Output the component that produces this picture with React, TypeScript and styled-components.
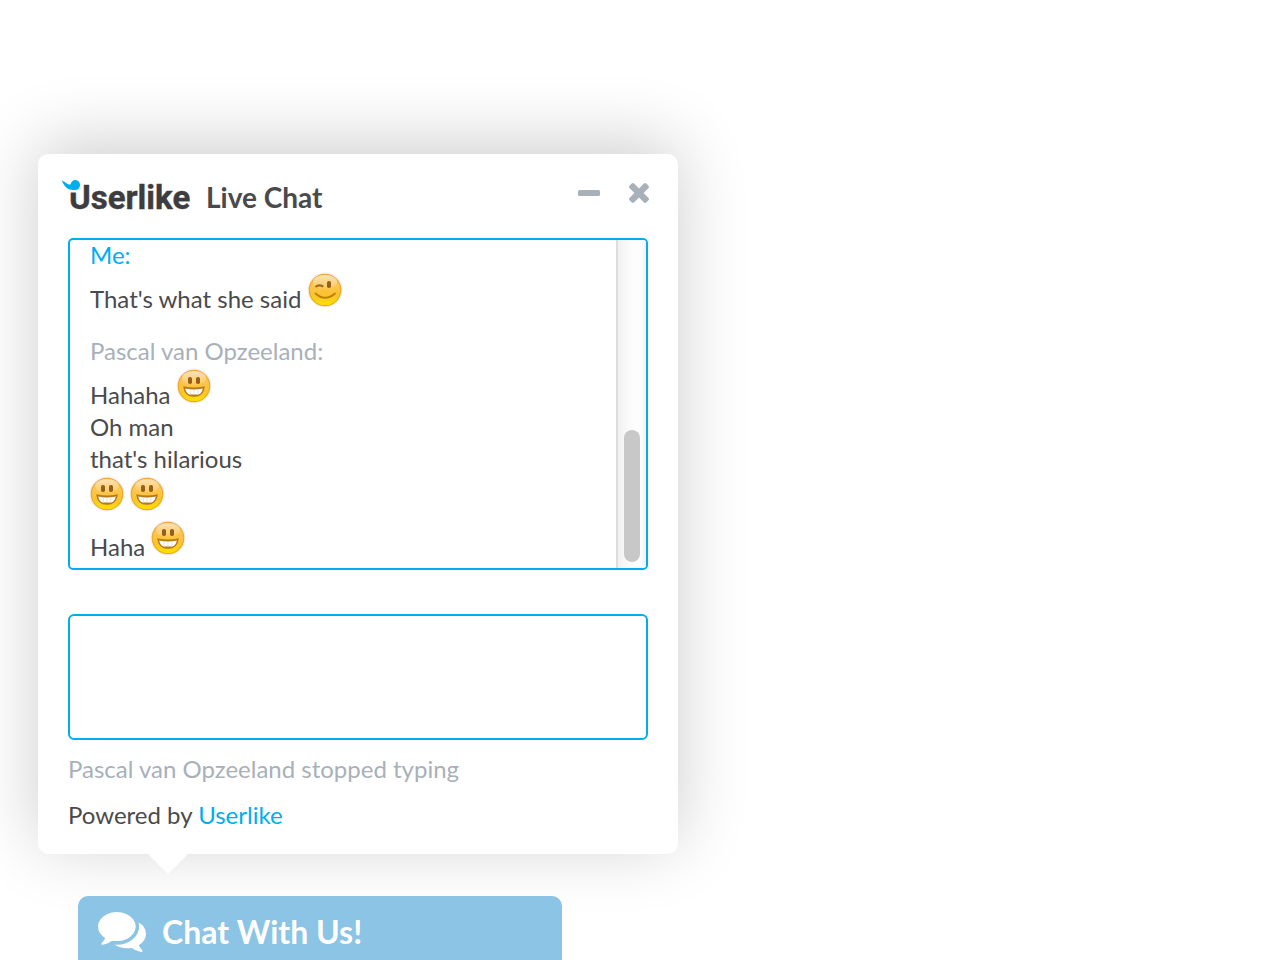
import React from "react";
import styled, { createGlobalStyle } from "styled-components";

const BLUE = "#00aeef";
const INK = "#4a4a4c";
const MUTED = "#a8b0ba";

const GlobalStyle = createGlobalStyle`
  *, *::before, *::after { box-sizing: border-box; }
  body {
    margin: 0;
    background: #fff;
    color: ${INK};
    font-family: Lato, "Liberation Sans", sans-serif;
    font-size: 24px;
    line-height: 32px;
  }
`;

const Page = styled.main`
  display: flex;
  flex-direction: column;
  min-height: 100vh;
  padding: 154px 38px 0;
  overflow: hidden;
`;

const Panel = styled.section`
  position: relative;
  width: 100%;
  max-width: 640px;
  padding: 0 30px 23px;
  border-radius: 10px;
  background: #fff;
  box-shadow: 0 -10px 70px rgba(0, 0, 0, 0.2);

  &::after {
    content: "";
    position: absolute;
    top: 100%;
    left: 110px;
    border: 20px solid transparent;
    border-top-color: #fff;
    border-bottom-width: 0;
  }
`;

const Header = styled.header`
  display: flex;
  align-items: flex-start;
  height: 84px;
  padding-top: 24px;
`;

const Logo = styled.svg`
  flex: none;
  width: 136px;
  height: 40px;
  margin-left: -6px;
  overflow: visible;
`;

const LogoText = styled.text`
  fill: #3d3d40;
  stroke: #3d3d40;
  stroke-width: 0.4px;
  font-family: Roboto, "Liberation Sans", sans-serif;
  font-size: 33px;
  font-weight: 700;
  line-height: 40px;
`;

const Title = styled.h1`
  margin: 3px auto 0 8px;
  font-size: 28px;
  font-weight: 700;
  line-height: 32px;
`;

const Controls = styled.div`
  display: flex;
  gap: 14px;
`;

const IconButton = styled.button`
  display: grid;
  place-items: center;
  width: 36px;
  height: 30px;
  padding: 0;
  border: 0;
  background: none;
  color: ${MUTED};
  cursor: pointer;

  &:last-child { margin-right: -9px; }
`;

const LogFrame = styled.div`
  display: flex;
  height: 332px;
  border: 2px solid ${BLUE};
  border-radius: 5px;
  overflow: hidden;
`;

const Log = styled.div`
  display: flex;
  flex: 1;
  flex-direction: column;
  justify-content: flex-end;
  gap: 20px;
  min-width: 0;
  padding: 0 20px 5px;
`;

const Message = styled.article`
  flex: none;
`;

const Author = styled.h2<{ $self?: boolean }>`
  margin: 0;
  color: ${(p) => (p.$self ? BLUE : MUTED)};
  font-size: 24px;
  font-weight: 400;
`;

const Line = styled.p`
  margin: 0;
`;

const Face = styled.svg`
  width: 36px;
  height: 36px;
  margin: 1px -1px 0;
  vertical-align: baseline;
`;

const ScrollTrack = styled.div`
  display: flex;
  flex: none;
  align-items: flex-end;
  justify-content: center;
  width: 30px;
  padding-bottom: 6px;
  border-left: 2px solid #dedede;
  background: linear-gradient(90deg, #f1f1f1, #fdfdfd 50%, #fdfdfd 80%, #f1f1f1);
`;

const ScrollThumb = styled.div`
  width: 16px;
  height: 132px;
  border-radius: 8px;
  background: #c8c8c8;
`;

const MessageInput = styled.textarea`
  display: block;
  width: 100%;
  height: 126px;
  margin: 44px 0 13px;
  padding: 10px 18px;
  border: 2px solid ${BLUE};
  border-radius: 6px;
  background: #fff;
  color: ${INK};
  font: inherit;
  resize: none;
  outline: none;
`;

const Status = styled.p`
  margin: 0 0 14px;
  color: ${MUTED};
`;

const Powered = styled.p`
  margin: 0;
`;

const Link = styled.a`
  color: ${BLUE};
  text-decoration: none;
`;

const ChatTab = styled.button`
  position: relative;
  display: flex;
  gap: 16px;
  width: calc(100% - 40px);
  max-width: 484px;
  height: 64px;
  margin: 42px 0 0 40px;
  padding: 16px 20px 0;
  border: 0;
  border-radius: 10px 10px 0 0;
  background: #8bc4e5;
  color: #fff;
  font: inherit;
  font-size: 32px;
  font-weight: 700;
  line-height: 40px;
  cursor: pointer;
`;

const ChatIcon = styled.svg`
  flex: none;
  width: 48px;
  height: 40px;
`;

function Emoji({ kind }: { kind: "grin" | "wink" }) {
  return (
    <Face viewBox="0 0 36 36" role="img" aria-label={kind}>
      <defs>
        <linearGradient id="skin" x1="0" y1="0" x2="0" y2="1">
          <stop offset="0" stopColor="#fbb02a" />
          <stop offset="0.35" stopColor="#fdc552" />
          <stop offset="0.65" stopColor="#fcc22e" />
          <stop offset="1" stopColor="#fde200" />
        </linearGradient>
        <linearGradient id="rim" x1="0" y1="0" x2="0" y2="1">
          <stop offset="0" stopColor="#f3a63c" />
          <stop offset="1" stopColor="#eab000" />
        </linearGradient>
        <linearGradient id="shine" x1="0" y1="0" x2="0" y2="1">
          <stop offset="0" stopColor="#fff" stopOpacity="0.65" />
          <stop offset="1" stopColor="#fff" stopOpacity="0.05" />
        </linearGradient>
      </defs>
      <circle cx="18" cy="18" r="17.5" fill="#eef0f7" />
      <circle cx="18" cy="18" r="15.7" fill="url(#skin)" stroke="url(#rim)" strokeWidth="1.2" />
      <ellipse cx="18" cy="10" rx="12" ry="7" fill="url(#shine)" />
      {kind === "grin" ? (
        <>
          <rect x="12" y="9" width="4" height="7" rx="1.8" fill="#96601a" />
          <rect x="20" y="9" width="4" height="7" rx="1.8" fill="#96601a" />
          <path d="M7.2 18.2Q18 21 28.8 18.2Q27.8 28.8 18 28.8Q8.2 28.8 7.2 18.2Z" fill="#b5781a" />
          <path d="M9.2 20.4Q18 22.4 26.8 20.4Q26 25 22.500 26.600H13.500Q10 25 9.2 20.4Z" fill="#fff" />
          <path d="M14.3 21.5V26.600M18 21.8V26.600M21.7 21.5V26.600" stroke="#ecd9b4" strokeWidth="0.7" />
        </>
      ) : (
        <>
          <path d="M8.5 14.8Q12 12 16.3 14.6" fill="none" stroke="#a06c18" strokeWidth="2.2" />
          <rect x="20" y="9" width="4" height="7" rx="1.8" fill="#96601a" />
          <path d="M8.5 21.500Q18 30 28 21.500" fill="none" stroke="#b9800f" strokeWidth="1.8" strokeLinecap="round" />
        </>
      )}
    </Face>
  );
}

export default function App() {
  return (
    <>
      <GlobalStyle />
      <Page>
        <Panel aria-label="Live chat">
          <Header>
            <Logo viewBox="0 0 136 40" role="img" aria-label="Userlike">
              <LogoText x="7" y="31">Userlike</LogoText>
              <path d="M0 0H16V14.500H0Z" fill="#fff" />
              <path d="M0 2.600C3.500 4 5.500 7.400 8.600 6.200C9.200 3.800 11 2 13 2C16 2 18 4.200 18 7C18 10 15.800 12 13 12C7 12.800 2 9.500 0 2.600Z" fill={BLUE} />
            </Logo>
            <Title>Live Chat</Title>
            <Controls>
              <IconButton type="button" aria-label="Minimize">
                <svg width="22" height="6" viewBox="0 0 22 6">
                  <rect width="22" height="6" rx="1.5" fill="currentColor" />
                </svg>
              </IconButton>
              <IconButton type="button" aria-label="Close">
                <svg width="20" height="20" viewBox="302 366 1188 1188">
                  <path
                    fill="currentColor"
                    d="M1490 1322q0 40-28 68l-136 136q-28 28-68 28t-68-28l-294-294-294 294q-28 28-68 28t-68-28l-136-136q-28-28-28-68t28-68l294-294-294-294q-28-28-28-68t28-68l136-136q28-28 68-28t68 28l294 294 294-294q28-28 68-28t68 28l136 136q28 28 28 68t-28 68l-294 294 294 294q28 28 28 68z"
                  />
                </svg>
              </IconButton>
            </Controls>
          </Header>

          <LogFrame>
            <Log role="log">
              <Message>
                <Author $self>Me:</Author>
                <Line>That's what she said <Emoji kind="wink" /></Line>
              </Message>
              <Message>
                <Author>Pascal van Opzeeland:</Author>
                <Line>Hahaha <Emoji kind="grin" /></Line>
                <Line>Oh man</Line>
                <Line>that's hilarious</Line>
                <Line><Emoji kind="grin" /> <Emoji kind="grin" /></Line>
                <Line>Haha <Emoji kind="grin" /></Line>
              </Message>
            </Log>
            <ScrollTrack aria-hidden="true">
              <ScrollThumb />
            </ScrollTrack>
          </LogFrame>

          <MessageInput aria-label="Your message" />
          <Status>Pascal van Opzeeland stopped typing</Status>
          <Powered>
            Powered by <Link href="#userlike">Userlike</Link>
          </Powered>
        </Panel>

        <ChatTab type="button">
          <ChatIcon viewBox="0 256 1792 1408" preserveAspectRatio="none" aria-hidden="true">
            <path
              fill="currentColor"
              d="M1408 768q0 139-94 257t-256.500 186.500-353.500 68.500q-86 0-176-16-124 88-278 128-36 9-86 16h-3q-11 0-20.500-8t-11.500-21q-1-3-1-6.500t.5-6.500 2-6l2.500-5 3.500-5.500 4-5 4.500-5 4-4.500q5-6 23-25t26-29.500 22.500-29 25-38.500 20.500-44q-124-72-195-177t-71-224q0-139 94-257t256.500-186.500 353.500-68.500 353.500 68.500 256.500 186.500 94 257zm384 256q0 120-71 224.500t-195 176.500q10 24 20.500 44t25 38.500 22.500 29 26 29.500 23 25q1 1 4 4.500t4.500 5 4 5 3.500 5.500l2.500 5 2 6 .5 6.500-1 6.500q-3 14-13 22t-22 7q-50-7-86-16-154-40-278-128-90 16-176 16-271 0-472-132 58 4 88 4 161 0 309-45t264-129q125-92 192-212t67-254q0-77-23-152 129 71 204 178t75 230z"
            />
          </ChatIcon>
          <span>Chat With Us!</span>
        </ChatTab>
      </Page>
    </>
  );
}
